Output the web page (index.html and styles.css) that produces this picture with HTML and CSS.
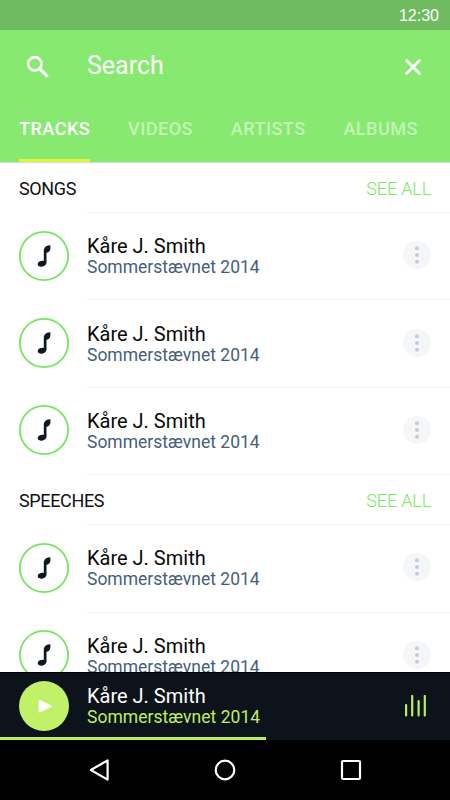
FILE: index.html
```html
<!DOCTYPE html>
<html lang="en">
<head>
<meta charset="utf-8">
<title>Search</title>
<link rel="stylesheet" href="styles.css">
</head>
<body>
<svg class="defs" aria-hidden="true">
  <symbol id="note" viewBox="0 0 50 50">
    <circle cx="25" cy="25" r="24.1" fill="none" stroke="#77e562" stroke-width="1.8"/>
    <path d="M24.8 18.4C25.5 15.6 28 14.3 31.4 14.2V17.7C31 20.3 29.6 21.4 27.5 21.8V32C26.8 34.6 24.5 35.7 22 35.7C19.6 35.7 18.4 34.4 18.8 32.6C19.3 30.7 21.3 29.8 23.3 29.8C24 29.8 24.5 29.9 24.8 30.1Z"/>
  </symbol>
  <symbol id="more" viewBox="0 0 28 28">
    <circle cx="14" cy="7.2" r="2"/><circle cx="14" cy="14" r="2"/><circle cx="14" cy="20.8" r="2"/>
  </symbol>
</svg>
<div class="screen">
  <div class="status">12:30</div>
  <header class="header">
    <div class="search">
      <svg class="search-icon" viewBox="0 0 24 24" fill="none" stroke="#fff"><circle cx="8.8" cy="8.8" r="6.7" stroke-width="2.6"/><path d="M13.6 13.6L21.6 21.6" stroke-width="3.2"/></svg>
      <span class="search-text">Search</span>
      <svg class="close-icon" viewBox="0 0 18 18" fill="none" stroke="#fff" stroke-width="2.7"><path d="M1.8 1.8L16.2 16.2M16.2 1.8L1.8 16.2"/></svg>
    </div>
    <nav class="tabs">
      <span class="tab active">TRACKS</span>
      <span class="tab">VIDEOS</span>
      <span class="tab">ARTISTS</span>
      <span class="tab">ALBUMS</span>
    </nav>
  </header>
  <main class="list">
    <section>
      <div class="section-head"><span class="section-title">SONGS</span><span class="see-all">SEE ALL</span></div>
      <div class="row"><svg class="cover"><use href="#note"/></svg><div class="info"><div class="name">Kåre J. Smith</div><div class="album">Sommerstævnet 2014</div></div><svg class="more"><use href="#more"/></svg></div>
      <div class="row"><svg class="cover"><use href="#note"/></svg><div class="info"><div class="name">Kåre J. Smith</div><div class="album">Sommerstævnet 2014</div></div><svg class="more"><use href="#more"/></svg></div>
      <div class="row"><svg class="cover"><use href="#note"/></svg><div class="info"><div class="name">Kåre J. Smith</div><div class="album">Sommerstævnet 2014</div></div><svg class="more"><use href="#more"/></svg></div>
    </section>
    <section class="divided">
      <div class="section-head"><span class="section-title">SPEECHES</span><span class="see-all">SEE ALL</span></div>
      <div class="row"><svg class="cover"><use href="#note"/></svg><div class="info"><div class="name">Kåre J. Smith</div><div class="album">Sommerstævnet 2014</div></div><svg class="more"><use href="#more"/></svg></div>
      <div class="row"><svg class="cover"><use href="#note"/></svg><div class="info"><div class="name">Kåre J. Smith</div><div class="album">Sommerstævnet 2014</div></div><svg class="more"><use href="#more"/></svg></div>
    </section>
  </main>
  <div class="player">
    <div class="player-body">
      <svg class="play" viewBox="0 0 50 50"><path d="M20.8 20.2V30.2L31.2 25.2Z" fill="#fff" stroke="#fff" stroke-width="2.4" stroke-linejoin="round"/></svg>
      <div class="info"><div class="name">Kåre J. Smith</div><div class="album">Sommerstævnet 2014</div></div>
      <svg class="bars" viewBox="0 0 22 22"><path d="M1.1 10V20.5M7.2 1V20.5M13.6 6V20.5M19.8 1V20.5" fill="none" stroke="#b9ee5c" stroke-width="2.2" stroke-linecap="round"/></svg>
    </div>
    <div class="track"><div class="progress"></div></div>
  </div>
  <div class="navbar">
    <svg viewBox="0 0 24 24"><path d="M3.8 12L20.6 2.4V21.6Z"/></svg>
    <svg viewBox="0 0 24 24"><circle cx="12" cy="12" r="9.3"/></svg>
    <svg viewBox="0 0 24 24"><rect x="3" y="3" width="18" height="18" rx="1"/></svg>
  </div>
</div>
</body>
</html>
```
FILE: styles.css
```css
* { box-sizing: border-box; }
body { margin: 0; font-family: Roboto, sans-serif; }
svg { display: block; flex: none; }
.defs { position: absolute; width: 0; height: 0; }
.screen { width: 450px; height: 800px; display: flex; flex-direction: column; overflow: hidden; background: #fff; white-space: nowrap; }
.status { flex: none; height: 30px; padding-right: 11px; background: #6fbb60; color: #fff; font: 16px/32px "Liberation Sans", sans-serif; text-align: right; }
.header { flex: none; height: 132px; background: #87e970; box-shadow: 0 1px 1px rgba(0,0,0,.15); position: relative; }
.search { height: 74px; padding: 0 28px 0 26px; display: flex; align-items: center; color: #fff; }
.search-icon { width: 24px; height: 24px; }
.search-text { margin-left: 37px; flex: 1; font-size: 25px; line-height: 30px; padding-bottom: 3px; }
.close-icon { width: 18px; height: 18px; }
.tabs { height: 58px; padding: 0 32px 0 19px; display: flex; justify-content: space-between; }
.tab { height: 58px; line-height: 50px; font-size: 18.2px; font-weight: 500; letter-spacing: .4px; color: rgba(255,255,255,.5); }
.tab.active { color: #fff; border-bottom: 3px solid #e2f53c; }
.list { flex: 1; min-height: 0; overflow: hidden; }
.section-head { height: 50px; padding: 2px 19px 0; display: flex; align-items: center; justify-content: space-between; font-size: 18px; color: #111; }
.section-title { letter-spacing: -.35px; }
.see-all { color: #7be663; font-weight: 300; letter-spacing: -.15px; }
.row { height: 87.4px; padding: 0 19px; display: flex; align-items: center; background: linear-gradient(#f1f3f4, #f1f3f4) 87px 0 / 363px 1px no-repeat; }
.divided { background: linear-gradient(#f1f3f4, #f1f3f4) 87px 0 / 363px 1px no-repeat; }
.cover { width: 50px; height: 50px; fill: #101820; }
.info { flex: 1; margin-left: 18px; }
.row .info { padding-top: 1px; }
.name { font-size: 20px; line-height: 22px; color: #080808; }
.album { font-size: 17.5px; line-height: 20px; color: #456078; }
.more { width: 28px; height: 28px; margin-bottom: 1px; border-radius: 50%; background: #f4f6f8; fill: #c2cbd6; }
.player { flex: none; height: 68px; background: #0d131b; border-top: 1px solid #000; display: flex; flex-direction: column; }
.player-body { height: 64px; padding: 2px 23px 0 19px; display: flex; align-items: center; }
.player .name { color: #fff; }
.player .album { color: #bdef62; letter-spacing: .03px; }
.play { width: 50px; height: 50px; border-radius: 50%; background: #c1f168; }
.bars { width: 22px; height: 22px; }
.track { height: 3px; }
.progress { width: 266px; height: 3px; background: #b9ee5c; }
.navbar { flex: none; height: 60px; background: #000; display: flex; justify-content: space-between; align-items: center; padding: 0 87px; }
.navbar svg { width: 24px; height: 24px; fill: none; stroke: #fff; stroke-width: 2.2; stroke-linejoin: round; }
```
